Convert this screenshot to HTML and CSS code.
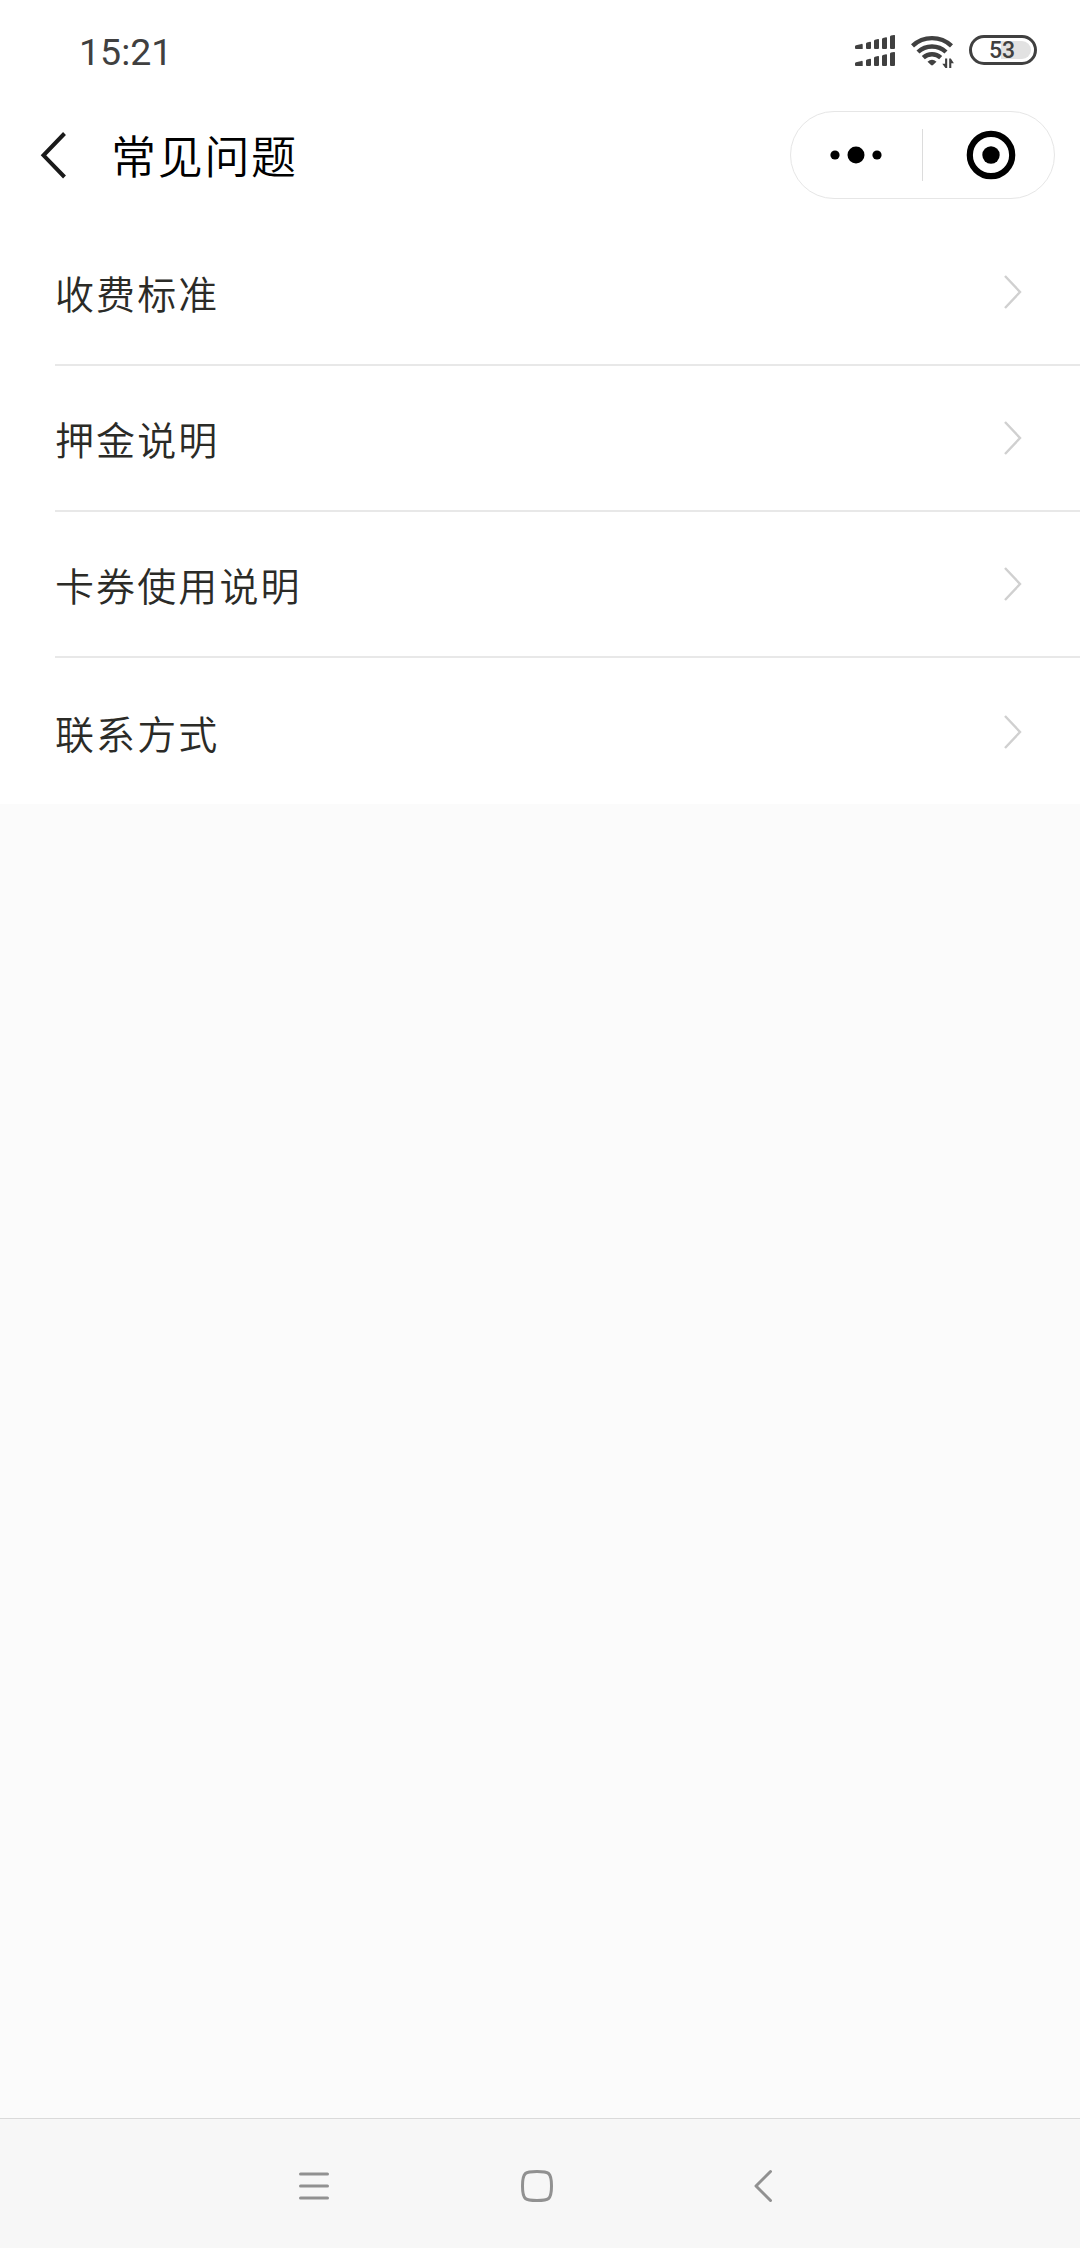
FILE: index.html
```html
<!DOCTYPE html>
<html lang="zh-CN">

<head>
    <meta charset="UTF-8">
    <meta name="viewport" content="width=device-width, initial-scale=1.0">
    <title>常见问题</title>
    <link rel="stylesheet" href="styles.css">
</head>

<body>

    <!-- 状态栏 -->
    <div class="status">
        <span class="time">15:21</span>
        <svg class="signal" width="40" height="32" viewBox="0 0 40 32" fill="#404040">
            <path id="bars" d="M0 11.5q0-1 1-1.3l5.5-1.3q1.2-.2 1.2 1V14H1q-1 0-1-1zM11 8.8q0-1 1-1.3l3-.7q1-.2 1 .8V13q0 1-1 1h-3q-1 0-1-1zM19 6q0-1 1-1.300l3-.7q1-.2 1 .8V13q0 1-1 1h-3q-1 0-1-1zM27 4.200q0-1 1-1.300l3-.7q1-.2 1 .8V13q0 1-1 1h-3q-1 0-1-1zM35 1.800q0-1 1-1.300l3-.5q1-.2 1 .8V13q0 1-1 1h-3q-1 0-1-1z"/>
            <use href="#bars" y="17"/>
        </svg>
        <svg class="wifi" width="44" height="34" viewBox="0 0 44 34">
            <g fill="none" stroke="#404040" stroke-width="4.400">
                <path d="M1.500 10.800A28.500 28.500 0 0 1 40.500 10.800"/>
                <path d="M7 17A20.500 20.500 0 0 1 35 17"/>
                <path d="M12.300 22.700A12.700 12.700 0 0 1 29.700 22.700"/>
            </g>
            <path d="M16.500 26.700q4.500-3.800 9 0L22 30q-1 .9-2 0z" fill="#404040"/>
            <path d="M36.200 23.500v9.500h-1.800L31.300 28.800h2.800v-5.300zM38.200 33v-9.500h1.600l3.100 4.700h-2.600V33z" fill="#404040"/>
        </svg>
        <div class="battery"><div class="level"></div><span>53</span></div>
    </div>

    <!-- 标题栏 -->
    <div class="header">
        <svg class="back" width="26" height="48" viewBox="0 0 26 48">
            <path d="M24.500 2.500L3.500 24.300L24.500 46" fill="none" stroke="#1a1a1a" stroke-width="4"/>
        </svg>
        <h1>常见问题</h1>
        <div class="capsule">
            <svg class="more" width="52" height="18" viewBox="0 0 52 18">
                <circle cx="5" cy="9" r="4.600"/>
                <circle cx="26" cy="9" r="8.500"/>
                <circle cx="47" cy="9" r="4.600"/>
            </svg>
            <i></i>
            <svg class="close" width="50" height="50" viewBox="0 0 50 50">
                <circle cx="25" cy="25" r="21.200" fill="none" stroke="#000" stroke-width="6.200"/>
                <circle cx="25" cy="25" r="8.700"/>
            </svg>
        </div>
    </div>

    <!-- 问题列表 -->
    <ul class="list">
        <li><span>收费标准</span><svg width="18" height="36" viewBox="0 0 18 36"><path d="M1 2L16 18L1 34"/></svg></li>
        <li><span>押金说明</span><svg width="18" height="36" viewBox="0 0 18 36"><path d="M1 2L16 18L1 34"/></svg></li>
        <li><span>卡券使用说明</span><svg width="18" height="36" viewBox="0 0 18 36"><path d="M1 2L16 18L1 34"/></svg></li>
        <li><span>联系方式</span><svg width="18" height="36" viewBox="0 0 18 36"><path d="M1 2L16 18L1 34"/></svg></li>
    </ul>

    <!-- 系统导航 -->
    <div class="nav">
        <svg width="32" height="34" viewBox="0 0 32 34">
            <path d="M2.500 5H29.500M2.500 17H29.500M2.500 29H29.500"/>
        </svg>
        <svg width="34" height="34" viewBox="0 0 34 34">
            <path d="M17 2.500C28.500 2.500 31.500 3 31.500 17S28.500 31.500 17 31.500S2.500 31 2.500 17S5.500 2.500 17 2.500z"/>
        </svg>
        <svg width="20" height="34" viewBox="0 0 20 34">
            <path d="M17.500 2.500L3 17L17.500 31.500"/>
        </svg>
    </div>

</body>

</html>
```
FILE: styles.css
```css
* {
    box-sizing: border-box;
}

body {
    margin: 0;
    width: 1080px;
    height: 2248px;
    display: flex;
    flex-direction: column;
    overflow: hidden;
    background-color: #fbfbfb;
    font-family: "Noto Sans CJK SC", sans-serif;
    font-weight: 350;
}

svg {
    display: block;
    flex: none;
}

.status {
    height: 102px;
    padding: 0 43px 0 79px;
    display: flex;
    align-items: flex-start;
    background-color: #fff;
}

.time {
    margin-right: auto;
    padding-top: 27px;
    font-family: Roboto, sans-serif;
    font-size: 37.5px;
    font-weight: 400;
    line-height: 50px;
    color: #404040;
}

.signal {
    margin: 35px 16px 0 0;
}

.wifi {
    margin: 35px 14px 0 0;
}

.battery {
    position: relative;
    width: 68px;
    height: 30px;
    margin-top: 35px;
    border: 3px solid #404040;
    border-radius: 15px;
    text-align: center;
    font-family: Roboto, sans-serif;
    font-size: 23px;
    font-weight: 500;
    line-height: 26px;
    color: #404040;
}

.battery span {
    position: relative;
    left: -1px;
}

/* 剩余电量的底色 */
.level {
    position: absolute;
    left: 29px;
    top: 3px;
    width: 30px;
    height: 18px;
    border-radius: 0 9px 9px 0;
    background-color: #e2e2e2;
}

.header {
    height: 117px;
    padding: 0 25px 11px 40px;
    display: flex;
    align-items: center;
    background-color: #fff;
}

.header h1 {
    margin: 0 auto 0 45px;
    font-size: 45px;
    font-weight: 350;
    line-height: 60px;
    letter-spacing: 1.7px;
    color: #000;
}

.capsule {
    width: 265px;
    height: 88px;
    display: flex;
    align-items: center;
    border: 1px solid #e6e6e6;
    border-radius: 44px;
}

.more {
    margin-left: 39px;
}

.capsule i {
    width: 1px;
    height: 52px;
    margin: 0 43px 0 40px;
    background-color: #dcdcdc;
}

.list {
    margin: 0;
    padding: 0 0 0 55px;
    list-style: none;
    background-color: #fff;
}

.list li {
    height: 146px;
    padding: 0 58px 0 0;
    display: flex;
    align-items: center;
    justify-content: space-between;
    border-bottom: 2px solid #e8e8e8;
    font-size: 39px;
    letter-spacing: 2.1px;
    color: #2b2b27;
}

.list li:first-child {
    height: 147px;
}

.list li:last-child {
    padding-top: 2px;
    border: 0;
}

.list path {
    fill: none;
    stroke: #d0d0d0;
    stroke-width: 2.4;
}

.nav {
    height: 130px;
    margin-top: auto;
    padding: 5px 0 0 298px;
    display: flex;
    align-items: center;
    gap: 190px;
    border-top: 1px solid #dadada;
    background-color: #f7f7f7;
}

.nav svg:last-child {
    margin-left: 9px;
}

.nav path {
    fill: none;
    stroke: #919191;
    stroke-width: 3;
    stroke-linecap: round;
    stroke-linejoin: round;
}
```
